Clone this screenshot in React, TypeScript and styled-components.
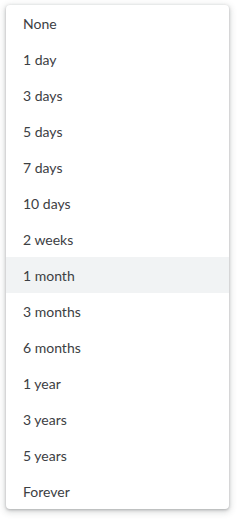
import React from "react";
import styled, { createGlobalStyle } from "styled-components";

const Global = createGlobalStyle`
  html, body { margin: 0; padding: 0; background: #ffffff; }
  body { font-family: Lato, "Liberation Sans", sans-serif; }
`;

const Page = styled.div`
  padding: 5px 9px 10px 6px;
`;

const Menu = styled.ul`
  list-style: none;
  margin: 0;
  padding: 0;
  width: 223px;
  background: #fff;
  border-radius: 4px;
  box-shadow: 0 1px 3px rgba(60, 64, 67, 0.35), 0 2px 6px 2px rgba(60, 64, 67, 0.15);
  overflow: hidden;
`;

const Item = styled.li<{ $active?: boolean }>`
  height: 36px;
  display: flex;
  align-items: center;
  padding: 1px 0 0 17px;
  box-sizing: border-box;
  font-size: 14px;
  color: #3c4043;
  background: ${(p) => (p.$active ? "#f1f3f4" : "transparent")};
`;

const options = [
  "None",
  "1 day",
  "3 days",
  "5 days",
  "7 days",
  "10 days",
  "2 weeks",
  "1 month",
  "3 months",
  "6 months",
  "1 year",
  "3 years",
  "5 years",
  "Forever",
];

export default function App() {
  return (
    <>
      <Global />
      <Page>
        <Menu>
          {options.map((o) => (
            <Item key={o} $active={o === "1 month"}>
              {o}
            </Item>
          ))}
        </Menu>
      </Page>
    </>
  );
}
